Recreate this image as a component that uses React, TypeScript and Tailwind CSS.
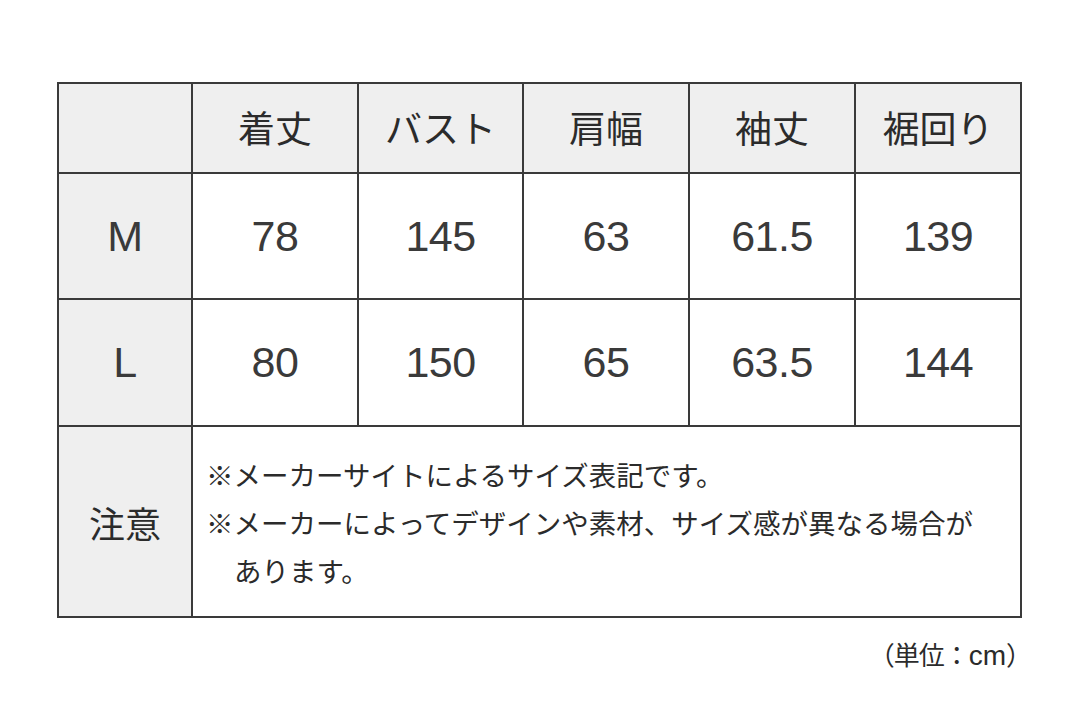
const headers = ["着丈", "バスト", "肩幅", "袖丈", "裾回り"];

const rows = [
  { size: "M", values: ["78", "145", "63", "61.5", "139"] },
  { size: "L", values: ["80", "150", "65", "63.5", "144"] },
];

const cell = "border-2 border-[#3a3a3a] text-center align-middle";
const num = "font-['Liberation_Sans',sans-serif] text-[43px] tracking-[-0.5px] text-[#3a3a3a]";

export default function App() {
  return (
    <div
      className="w-[1076px] h-[718px] bg-white text-[#2b2b2b] pt-[82px] pl-[57px]"
      style={{ fontFamily: '"Noto Sans CJK JP", "Noto Sans", sans-serif' }}
    >
      <table className="border-collapse table-fixed w-[965px]">
        <colgroup>
          <col className="w-[134px]" />
          <col className="w-[166px]" />
          <col className="w-[165px]" />
          <col className="w-[166px]" />
          <col className="w-[166px]" />
          <col className="w-[166px]" />
        </colgroup>
        <tbody>
          <tr className="h-[90px] bg-[#efefef]">
            <td className={cell} />
            {headers.map((h) => (
              <td key={h} className={`${cell} text-[37px]`}>
                {h}
              </td>
            ))}
          </tr>
          {rows.map((r, i) => (
            <tr key={r.size} className={i === 0 ? "h-[126px]" : "h-[127px]"}>
              <td className={`${cell} bg-[#efefef]`}>
                <span className={num}>{r.size}</span>
              </td>
              {r.values.map((v, j) => (
                <td key={j} className={cell}>
                  <span className={num}>{v}</span>
                </td>
              ))}
            </tr>
          ))}
          <tr className="h-[191px]">
            <td className={`${cell} bg-[#efefef] text-[36px]`}>注意</td>
            <td colSpan={5} className="border-2 border-[#3a3a3a] align-middle pl-[13px] text-[27.5px] leading-[48px]">
              <p>※メーカーサイトによるサイズ表記です。</p>
              <p>
                ※メーカーによってデザインや素材、サイズ感が異なる場合が
                <br />
                <span className="pl-[28px]">あります。</span>
              </p>
            </td>
          </tr>
        </tbody>
      </table>
      <div className="w-[974px] text-right text-[26px] mt-[16px] tracking-[-1px]">
        （単位：<span className="font-['Liberation_Sans',sans-serif] text-[28px] tracking-normal">cm</span>）
      </div>
    </div>
  );
}
